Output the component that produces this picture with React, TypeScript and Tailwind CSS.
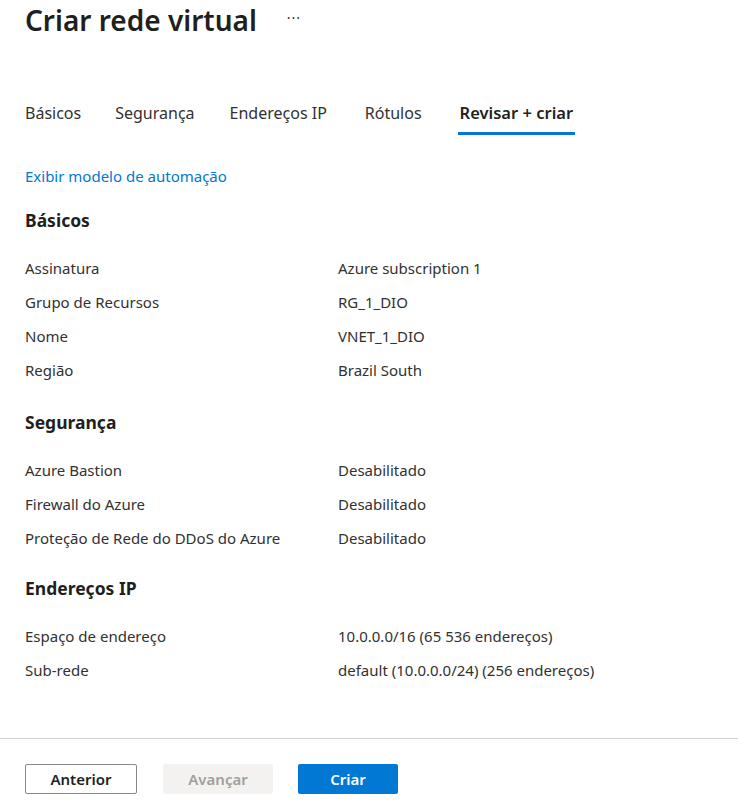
import React from 'react';

const tabs = [
  { label: 'Básicos', ml: 'ml-0' },
  { label: 'Segurança', ml: 'ml-[34px]' },
  { label: 'Endereços IP', ml: 'ml-[35px]' },
  { label: 'Rótulos', ml: 'ml-[38px]' },
  { label: 'Revisar + criar', ml: 'ml-[38px]' },
];

const sections: { title: string; mt: string; rows: [string, string][] }[] = [
  {
    title: 'Básicos',
    mt: 'mt-[23px]',
    rows: [
      ['Assinatura', 'Azure subscription 1'],
      ['Grupo de Recursos', 'RG_1_DIO'],
      ['Nome', 'VNET_1_DIO'],
      ['Região', 'Brazil South'],
    ],
  },
  {
    title: 'Segurança',
    mt: 'mt-[31px]',
    rows: [
      ['Azure Bastion', 'Desabilitado'],
      ['Firewall do Azure', 'Desabilitado'],
      ['Proteção de Rede do DDoS do Azure', 'Desabilitado'],
    ],
  },
  {
    title: 'Endereços IP',
    mt: 'mt-[29px]',
    rows: [
      ['Espaço de endereço', '10.0.0.0/16 (65 536 endereços)'],
      ['Sub-rede', 'default (10.0.0.0/24) (256 endereços)'],
    ],
  },
];

export default function App() {
  return (
    <div
      className="w-[738px] h-[810px] bg-white text-[#323130] flex flex-col overflow-hidden"
      style={{ fontFamily: '"Noto Sans", "Open Sans", sans-serif' }}
    >
      <div className="flex-1 px-[25px]">
        {/* header */}
        <div className="flex items-center h-[40px]">
          <h1 className="text-[28px] font-semibold text-[#201f1e] leading-[40px]">Criar rede virtual</h1>
          <span className="ml-[30px] text-[14px] text-[#323130] tracking-[1px] -mt-[6px]">···</span>
        </div>

        {/* tabs */}
        <div className="flex mt-[61px] text-[16px]">
          {tabs.map((t, i) => {
            const active = i === tabs.length - 1;
            return (
              <div key={t.label} className={`flex flex-col items-center ${t.ml}`}>
                <span className={active ? 'font-semibold text-[16.5px] text-[#201f1e] leading-[24px]' : 'leading-[24px]'}>
                  {t.label}
                </span>
                <div className={active ? 'mt-[7px] h-[3px] w-[calc(100%+4px)] bg-[#0078d4]' : 'mt-[7px] h-[3px]'} />
              </div>
            );
          })}
        </div>

        <a className="block mt-[31px] text-[15px] text-[#0078d4] leading-[20px]">Exibir modelo de automação</a>

        {sections.map((s) => (
          <div key={s.title} className={s.mt}>
            <h2 className="text-[17.5px] font-bold text-[#201f1e] leading-[22px]">{s.title}</h2>
            <div className="mt-[27px] flex flex-col gap-[14px] text-[15px]">
              {s.rows.map(([k, v]) => (
                <div key={k} className="flex leading-[20px]">
                  <span className="w-[313px]">{k}</span>
                  <span>{v}</span>
                </div>
              ))}
            </div>
          </div>
        ))}
      </div>

      {/* footer */}
      <div className="border-t border-[#d2d0ce] h-[72px] px-[25px] flex items-start pt-[25px] gap-[26px] text-[15px] font-semibold">
        <button className="w-[112px] h-[30px] border border-[#8a8886] rounded-[2px] text-[#201f1e]">Anterior</button>
        <button className="w-[110px] h-[30px] rounded-[2px] bg-[#f3f2f1] text-[#a19f9d]">Avançar</button>
        <button className="w-[100px] h-[30px] rounded-[2px] bg-[#0078d4] text-white ml-[-1px]">Criar</button>
      </div>
    </div>
  );
}
